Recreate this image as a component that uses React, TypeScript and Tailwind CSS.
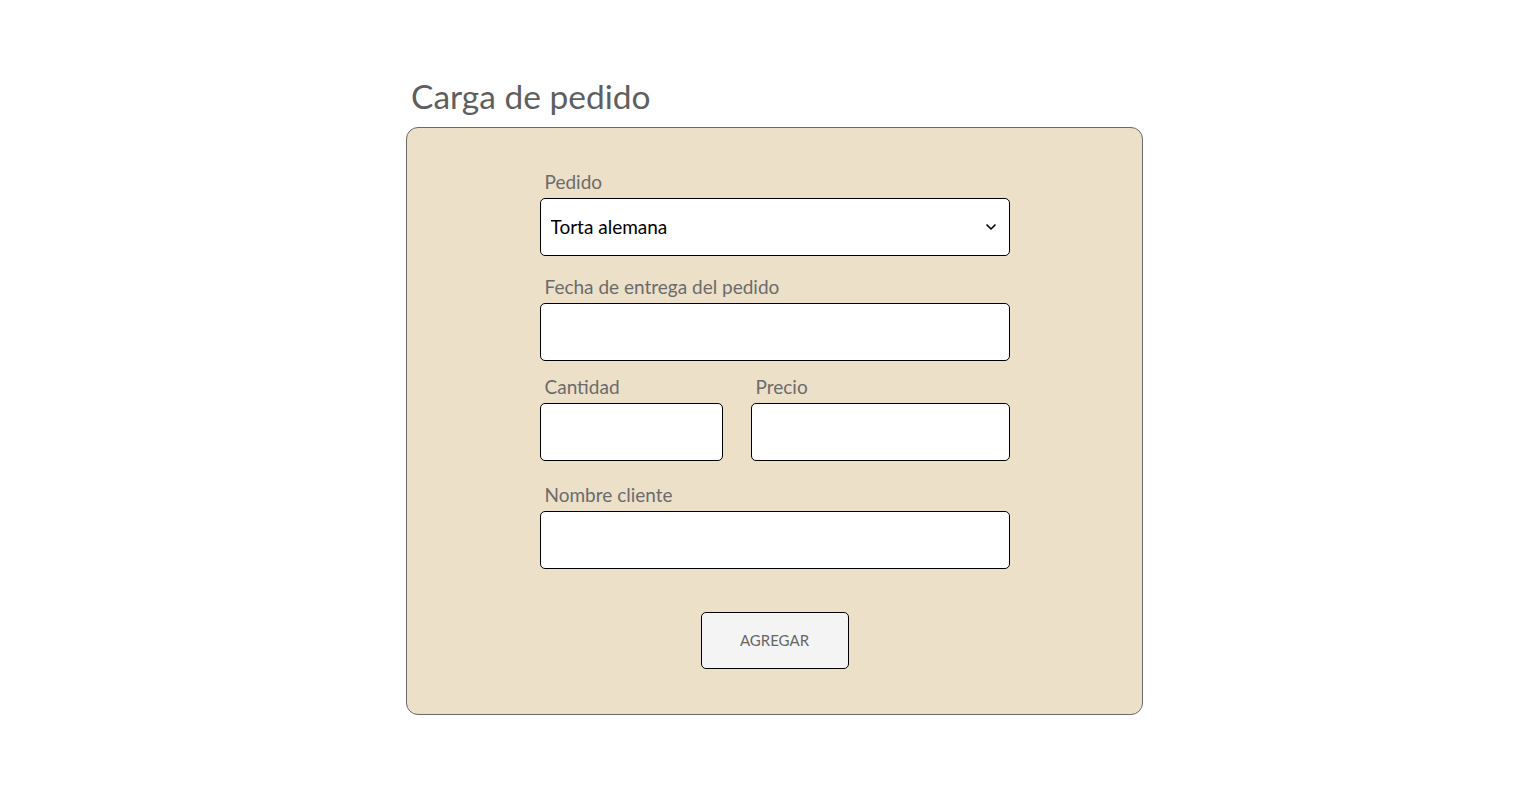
import { ChevronDown } from "lucide-react";

// Order entry form ("Carga de pedido")

const LABEL = "block pl-[5px] text-[19px] leading-6 text-[#6b6b6b]";
const FIELD =
  "block h-[58px] w-full rounded-[5px] border border-black bg-white px-[10px] text-[19px] text-black outline-none";

export default function App() {
  return (
    <div
      className="min-h-screen bg-white"
      style={{ fontFamily: '"Lato", "Liberation Sans", sans-serif' }}
    >
      <div className="flex justify-center pl-8 pt-[74px]">
        <div className="w-[737px]">
          <h1 className="pl-[5px] text-[33.5px] leading-[44px] text-[#5f5f5f]">
            Carga de pedido
          </h1>
          <form
            className="mt-[9px] rounded-[12px] border border-[#6a6a6a] bg-[#ece0c9] pt-[42px] pb-[45px]"
            onSubmit={(e) => e.preventDefault()}
          >
            <div className="mx-auto w-[470px]">
              <label className={LABEL}>Pedido</label>
              <div className="relative mt-1">
                <select className={`${FIELD} appearance-none`} defaultValue="torta">
                  <option value="torta">Torta alemana</option>
                </select>
                <ChevronDown
                  className="pointer-events-none absolute right-[11px] top-1/2 h-4 w-4 -translate-y-1/2 text-black"
                  strokeWidth={2.5}
                />
              </div>

              <label className={`${LABEL} mt-[19px]`}>Fecha de entrega del pedido</label>
              <input type="text" className={`${FIELD} mt-1`} />

              <div className="mt-[14px] flex gap-[28px]">
                <div className="w-[183px]">
                  <label className={LABEL}>Cantidad</label>
                  <input type="text" className={`${FIELD} mt-1`} />
                </div>
                <div className="flex-1">
                  <label className={LABEL}>Precio</label>
                  <input type="text" className={`${FIELD} mt-1`} />
                </div>
              </div>

              <label className={`${LABEL} mt-[22px]`}>Nombre cliente</label>
              <input type="text" className={`${FIELD} mt-1`} />

              <div className="mt-[43px] flex justify-center">
                <button
                  type="submit"
                  className="h-[57px] w-[148px] rounded-[5px] border border-black bg-[#f4f4f4] text-[15px] text-[#666]"
                >
                  AGREGAR
                </button>
              </div>
            </div>
          </form>
        </div>
      </div>
    </div>
  );
}
